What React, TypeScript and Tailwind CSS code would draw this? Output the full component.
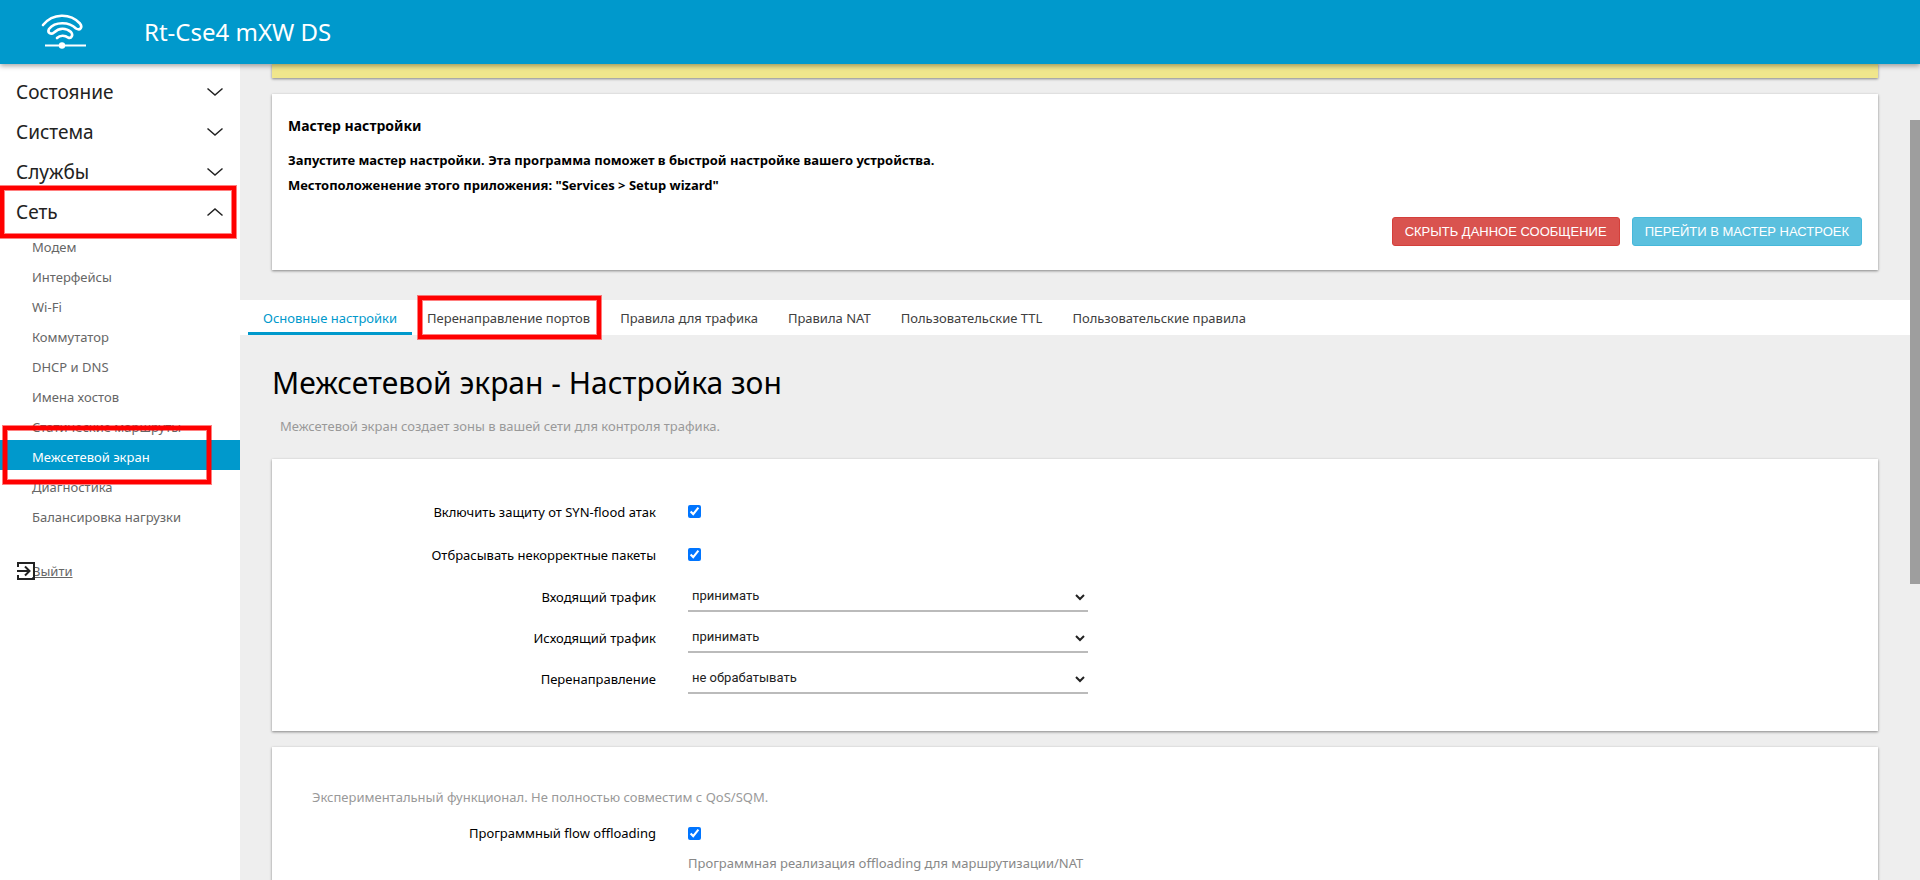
import { useState } from "react";

type Option = { label: string; value: string };

const sections = ["Состояние", "Система", "Службы"];

const networkItems = [
  "Модем",
  "Интерфейсы",
  "Wi-Fi",
  "Коммутатор",
  "DHCP и DNS",
  "Имена хостов",
  "Статические маршруты",
  "Межсетевой экран",
  "Диагностика",
  "Балансировка нагрузки",
];

const tabs = [
  "Основные настройки",
  "Перенаправление портов",
  "Правила для трафика",
  "Правила NAT",
  "Пользовательские TTL",
  "Пользовательские правила",
];

const policies: Option[] = [
  { label: "принимать", value: "ACCEPT" },
  { label: "не обрабатывать", value: "REJECT" },
  { label: "не принимать", value: "DROP" },
];

function Logo() {
  return (
    <svg className="h-9 w-12" viewBox="0 0 48 36" fill="none" stroke="#fff" strokeWidth="2.6" strokeLinecap="round" strokeLinejoin="round" aria-hidden="true">
      <path d="M3 11C13 -1 30 -1 40 9.5C43 13.5 40 17 36 14.5C29 7.5 15 7.5 9 15C7 19 11 21 14 18.5C19 13.5 26 13.5 31 18C33.5 21 31.5 25 28 23.5C25 21 20 21 17 24" />
      <path d="M5 31.5H46" strokeWidth="2.2" strokeLinecap="butt" />
      <circle cx="22" cy="31.5" r="3.2" fill="#fff" stroke="none" />
    </svg>
  );
}

function Chevron({ up = false }: { up?: boolean }) {
  return (
    <svg className="h-4 w-4" viewBox="0 0 16 16" fill="none" stroke="#222" strokeWidth="1.5" aria-hidden="true">
      <path d={up ? "M0.5 11.5L8 5L15.5 11.5" : "M0.5 4.5L8 11L15.5 4.5"} />
    </svg>
  );
}

function Frame({ className }: { className: string }) {
  return (
    <span
      aria-hidden="true"
      className={`pointer-events-none absolute z-10 border-4 border-[#ff0000] shadow-[0_0_0_1px_#ff000080,inset_0_0_0_1px_#ff000080] ${className}`}
    />
  );
}

function Card({ className = "", children }: { className?: string; children?: React.ReactNode }) {
  return (
    <section className={`mr-8 ml-8 shadow-[0_1px_3px_rgba(0,0,0,0.24),0_1px_2px_rgba(0,0,0,0.24)] ${className}`}>{children}</section>
  );
}

function CheckRow({ id, label, className = "" }: { id: string; label: string; className?: string }) {
  return (
    <div className={`flex items-center gap-8 ${className}`}>
      <label htmlFor={id} className="w-96 pt-0.5 text-right">
        {label}
      </label>
      <input id={id} type="checkbox" defaultChecked className="h-[13px] w-[13px] accent-[#0075ff]" />
    </div>
  );
}

function SelectRow({ id, label, initial }: { id: string; label: string; initial: string }) {
  return (
    <div className="flex h-[41px] items-center gap-8">
      <label htmlFor={id} className="w-96 pt-0.5 text-right">
        {label}
      </label>
      <select
        id={id}
        defaultValue={initial}
        className="h-[30px] w-[400px] border-b-2 border-[#bbb] bg-transparent font-[Roboto,sans-serif] text-[13px] text-[#222]"
      >
        {policies.map((p) => (
          <option key={p.value} value={p.value}>
            {p.label}
          </option>
        ))}
      </select>
    </div>
  );
}

export default function App() {
  const [tab, setTab] = useState(0);

  return (
    <div className="flex h-screen flex-col overflow-hidden bg-[#eee] font-['Noto_Sans','Open_Sans',sans-serif] text-[13px] text-black">
      <header className="z-20 flex h-16 shrink-0 items-center bg-[#0099cc] pl-10 text-white shadow-[0_2px_5px_rgba(0,0,0,0.35)]">
        <Logo />
        <a href="#" className="ml-14 text-2xl">
          Rt-Cse4 mXW DS
        </a>
      </header>

      <div className="flex min-h-0 flex-1">
        <aside className="w-60 shrink-0 bg-white pt-1.5">
          <nav>
            {sections.map((s) => (
              <button key={s} className="flex h-10 w-full items-center justify-between pt-1 pr-[17px] pl-4 text-[19px] text-[#222]">
                {s}
                <Chevron />
              </button>
            ))}
            <div className="relative">
              <button className="flex h-10 w-full items-center justify-between pt-1 pr-[17px] pl-4 text-[19px] text-[#222]">
                Сеть
                <Chevron up />
              </button>
              <Frame className="-top-1 right-1 -bottom-2 left-0" />
            </div>
            <ul>
              {networkItems.map((item) => {
                const active = item === "Межсетевой экран";
                return (
                  <li key={item} className="relative">
                    <a
                      href="#"
                      className={`flex h-[30px] items-center pt-1.5 pl-8 ${active ? "bg-[#0099cc] text-white" : "text-[#666]"}`}
                    >
                      {item}
                    </a>
                    {active && <Frame className="-top-3.5 right-[29px] -bottom-3.5 left-[3px]" />}
                  </li>
                );
              })}
            </ul>
          </nav>
          <a href="#" className="relative mt-[26px] flex h-[30px] items-center pt-0.5 pl-8 text-[#666] underline">
            Выйти
            <svg className="absolute top-[5px] left-4 h-5 w-5" viewBox="0 0 20 20" fill="none" stroke="#222" strokeWidth="2" aria-hidden="true">
              <path d="M2 6V2H18V18H2V14" />
              <path d="M1 10H13M9 5.5L13.5 10L9 14.5" />
            </svg>
          </a>
        </aside>

        <main className="min-w-0 flex-1 overflow-hidden">
          <Card className="h-3.5 bg-[#f0e68c]" />

          <Card className="mt-4 bg-white px-4 pt-5 pb-6 font-bold">
            <h2 className="text-sm leading-6">Мастер настройки</h2>
            <p className="mt-2.5 leading-[25px]">
              Запустите мастер настройки. Эта программа поможет в быстрой настройке вашего устройства.
              <br />
              Местоположенение этого приложения: "Services &gt; Setup wizard"
            </p>
            <div className="mt-[19px] flex justify-end gap-3 font-['Liberation_Sans',sans-serif] text-[13px] font-normal text-white">
              <button className="h-[29px] rounded-[3px] border border-[#d43f3a] bg-[#d9534f] px-3">СКРЫТЬ ДАННОЕ СООБЩЕНИЕ</button>
              <button className="h-[29px] rounded-[3px] border border-[#46b8da] bg-[#5bc0de] px-3">ПЕРЕЙТИ В МАСТЕР НАСТРОЕК</button>
            </div>
          </Card>

          <div role="tablist" className="mt-[30px] flex h-[35px] bg-white pl-2">
            {tabs.map((t, i) => (
              <div key={t} className="relative">
                <button
                  role="tab"
                  aria-selected={i === tab}
                  onClick={() => setTab(i)}
                  className={`h-full border-b-[3px] px-[15px] pt-1.5 ${
                    i === tab ? "border-[#0099cc] text-[#0099cc]" : "border-transparent text-[#404040]"
                  }`}
                >
                  {t}
                </button>
                {i === 1 && <Frame className="-top-1 right-1 -bottom-1 left-1.5" />}
              </div>
            ))}
          </div>

          <h1 className="mt-6 ml-8 text-[30px] leading-[48px]">Межсетевой экран - Настройка зон</h1>
          <p className="mt-[9px] ml-10 leading-5 text-[#999]">Межсетевой экран создает зоны в вашей сети для контроля трафика.</p>

          <Card className="mt-[23px] bg-white pt-[31px] pb-8">
            <CheckRow id="syn" label="Включить защиту от SYN-flood атак" className="h-[43px]" />
            <CheckRow id="invalid" label="Отбрасывать некорректные пакеты" className="h-[43px]" />
            <SelectRow id="input" label="Входящий трафик" initial="ACCEPT" />
            <SelectRow id="output" label="Исходящий трафик" initial="ACCEPT" />
            <SelectRow id="forward" label="Перенаправление" initial="REJECT" />
          </Card>

          <Card className="mt-4 h-80 bg-white pt-10">
            <p className="ml-10 leading-5 text-[#999]">Экспериментальный функционал. Не полностью совместим с QoS/SQM.</p>
            <CheckRow id="offload" label="Программный flow offloading" className="mt-4 h-5" />
            <p className="mt-2.5 ml-[416px] leading-5 text-[#888]">Программная реализация offloading для маршрутизации/NAT</p>
          </Card>
        </main>

        <div aria-hidden="true" className="w-2.5 shrink-0 pt-14">
          <div className="h-[61%] bg-[#9e9e9e]" />
        </div>
      </div>
    </div>
  );
}
